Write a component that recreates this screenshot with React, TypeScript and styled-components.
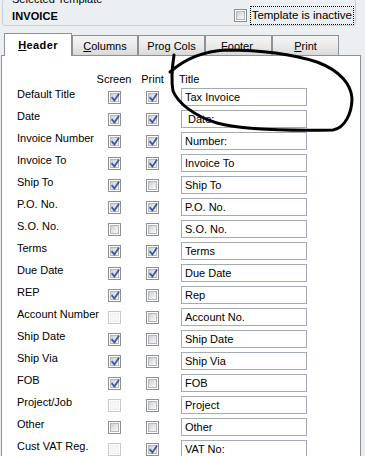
import React from "react";
import styled, { createGlobalStyle } from "styled-components";

const GlobalStyle = createGlobalStyle`
  html, body { margin: 0; padding: 0; background: #ebeff2; }
  body { font-family: "Liberation Sans", Arial, sans-serif; font-size: 11px; color: #000; }
  #root { width: 365px; height: 456px; overflow: hidden; }
`;

const Page = styled.div`
  position: relative;
  width: 365px;
  height: 456px;
  overflow: hidden;
  background: #ebeff2;
`;

const GroupBox = styled.fieldset`
  box-sizing: border-box;
  margin: -7px 0 0 2px;
  width: 354px;
  height: 33px;
  padding: 0 1px 0 9px;
  border: 1px solid #c9d2d9;
  border-radius: 3px;
  display: flex;
  align-items: center;
  justify-content: space-between;
`;

const Legend = styled.legend`
  padding: 0 2px;
  margin-left: -2px;
  font-size: 11px;
  line-height: 13px;
  color: #000;
`;

const TemplateName = styled.span`
  font-weight: bold;
  font-size: 11px;
  letter-spacing: 0.1px;
`;

const InactiveToggle = styled.label`
  display: flex;
  align-items: center;
  gap: 3px;
`;

const FocusText = styled.span`
  border: 1px dotted #000;
  padding: 1px 1px 2px 1px;
  line-height: 14px;
  font-size: 11.5px;
`;

const TabStrip = styled.div`
  position: relative;
  z-index: 2;
  display: flex;
  align-items: flex-end;
  height: 23px;
  margin: 7px 0 -1px 4px;
`;

const Tab = styled.div<{ $active?: boolean; $w: number }>`
  box-sizing: border-box;
  width: ${(p) => p.$w}px;
  height: ${(p) => (p.$active ? 23 : 20)}px;
  margin-bottom: ${(p) => (p.$active ? 0 : 1)}px;
  border: 1px solid #8d9097;
  border-bottom: none;
  background: ${(p) =>
    p.$active ? "#ffffff" : "linear-gradient(#f4f4f4 0%, #ebebeb 50%, #d9d9d9 100%)"};
  display: flex;
  align-items: center;
  justify-content: center;
  font-size: 11px;
  font-weight: ${(p) => (p.$active ? "bold" : "normal")};
  letter-spacing: ${(p) => (p.$active ? "0.4px" : "0")};
  padding-bottom: ${(p) => (p.$active ? 1 : 0)}px;
  u { text-decoration: underline; text-underline-offset: 1px; }
`;

const Panel = styled.div`
  position: relative;
  z-index: 1;
  box-sizing: border-box;
  margin-left: 1px;
  width: 360px;
  height: 410px;
  background: #fff;
  border: 1px solid #8d9097;
  border-bottom: none;
  padding: 17px 0 0 15px;
`;

const GridRow = styled.div<{ $header?: boolean }>`
  display: grid;
  grid-template-columns: 84px 26px 51px 130px;
  height: ${(p) => (p.$header ? 13 : 22)}px;
  align-items: ${(p) => (p.$header ? "start" : "center")};
`;

const HeadCell = styled.div<{ $left?: boolean }>`
  display: flex;
  justify-content: ${(p) => (p.$left ? "flex-start" : "center")};
  padding-left: ${(p) => (p.$left ? 1 : 0)}px;
  line-height: 13px;
  white-space: nowrap;
`;

const Label = styled.div`
  align-self: start;
  padding-top: 2px;
  line-height: 13px;
  white-space: nowrap;
`;

const BoxCell = styled.div`
  display: flex;
  justify-content: center;
  align-items: center;
  padding-top: 1px;
`;

const BoxOuter = styled.span<{ $disabled?: boolean }>`
  box-sizing: border-box;
  width: 13px;
  height: 13px;
  border: 1px solid ${(p) => (p.$disabled ? "#c8c9ca" : "#8e8f8f")};
  background: #fff;
  padding: 1px;
  display: inline-flex;
`;

const BoxInner = styled.span<{ $disabled?: boolean }>`
  box-sizing: border-box;
  width: 9px;
  height: 9px;
  border: 1px solid ${(p) => (p.$disabled ? "#eeeeee" : "#b4b8bd")};
  background: ${(p) =>
    p.$disabled ? "#f7f7f7" : "linear-gradient(135deg, #cbced3 0%, #e4e6e8 50%, #f7f7f7 100%)"};
  position: relative;
  display: flex;
  align-items: center;
  justify-content: center;
`;

const Tick = styled.svg`
  position: absolute;
  left: -1px;
  top: -2px;
  overflow: visible;
`;

const Field = styled.div`
  box-sizing: border-box;
  margin-left: 3px;
  width: 126px;
  height: 18px;
  border: 1px solid #a5abb3;
  background: #fff;
  padding-left: 3px;
  line-height: 16px;
  white-space: pre;
`;

const Scribble = styled.svg`
  position: absolute;
  left: 0;
  top: 0;
  z-index: 5;
  pointer-events: none;
`;

type State = "on" | "off" | "dis" | "dison";

const CheckBox: React.FC<{ state: State }> = ({ state }) => {
  const disabled = state === "dis" || state === "dison";
  const checked = state === "on" || state === "dison";
  return (
    <BoxOuter $disabled={disabled}>
      <BoxInner $disabled={disabled}>
        {checked && (
          <Tick width="11" height="11" viewBox="0 0 11 11">
            <path
              d="M2.2 5.8 L4.4 8.4 L8.6 2.2"
              fill="none"
              stroke="#3f56a3"
              strokeWidth="1.8"
              strokeLinecap="square"
            />
          </Tick>
        )}
      </BoxInner>
    </BoxOuter>
  );
};

const rows: { label: string; s: State; p: State; title: string }[] = [
  { label: "Default Title", s: "on", p: "on", title: "Tax Invoice" },
  { label: "Date", s: "on", p: "on", title: " Date:" },
  { label: "Invoice Number", s: "on", p: "on", title: "Number:" },
  { label: "Invoice To", s: "on", p: "on", title: "Invoice To" },
  { label: "Ship To", s: "on", p: "off", title: "Ship To" },
  { label: "P.O. No.", s: "on", p: "on", title: "P.O. No." },
  { label: "S.O. No.", s: "off", p: "off", title: "S.O. No." },
  { label: "Terms", s: "on", p: "on", title: "Terms" },
  { label: "Due Date", s: "on", p: "on", title: "Due Date" },
  { label: "REP", s: "on", p: "off", title: "Rep" },
  { label: "Account Number", s: "dis", p: "off", title: "Account No." },
  { label: "Ship Date", s: "on", p: "off", title: "Ship Date" },
  { label: "Ship Via", s: "on", p: "off", title: "Ship Via" },
  { label: "FOB", s: "on", p: "off", title: "FOB" },
  { label: "Project/Job", s: "dis", p: "off", title: "Project" },
  { label: "Other", s: "off", p: "off", title: "Other" },
  { label: "Cust VAT Reg.", s: "dis", p: "on", title: "VAT No:" },
];

export default function App() {
  return (
    <Page>
      <GlobalStyle />
      <GroupBox>
        <Legend>Selected Template</Legend>
        <TemplateName>INVOICE</TemplateName>
        <InactiveToggle>
          <CheckBox state="off" />
          <FocusText>Template is inactive</FocusText>
        </InactiveToggle>
      </GroupBox>

      <TabStrip>
        <Tab $active $w={68}>
          <span>
            <u>H</u>eader
          </span>
        </Tab>
        <Tab $w={66}>
          <span>
            <u>C</u>olumns
          </span>
        </Tab>
        <Tab $w={67}>
          <span>
            Pro<u>g</u> Cols
          </span>
        </Tab>
        <Tab $w={67}>
          <span>
            Foote<u>r&nbsp;</u>
          </span>
        </Tab>
        <Tab $w={67}>
          <span>
            <u>P</u>rint
          </span>
        </Tab>
      </TabStrip>

      <Panel>
        <GridRow $header>
          <div />
          <HeadCell>Screen</HeadCell>
          <HeadCell>Print</HeadCell>
          <HeadCell $left>Title</HeadCell>
        </GridRow>
        {rows.map((r) => (
          <GridRow key={r.label}>
            <Label>{r.label}</Label>
            <BoxCell>
              <CheckBox state={r.s} />
            </BoxCell>
            <BoxCell>
              <CheckBox state={r.p} />
            </BoxCell>
            <Field>{r.title}</Field>
          </GridRow>
        ))}
      </Panel>

      <Scribble width="365" height="456" viewBox="0 0 365 456">
        <path
          d="M174 55 C172 68, 171 80, 173 91 C178 103, 194 116, 217 123 C240 129, 280 131, 333 130 C345 128, 352 113, 352 98 C351 85, 341 71, 317 62 C295 55, 262 50, 226 50 C205 51, 186 58, 170 72"
          fill="none"
          stroke="#000"
          strokeWidth="3"
          strokeLinecap="round"
          strokeLinejoin="round"
        />
      </Scribble>
    </Page>
  );
}
